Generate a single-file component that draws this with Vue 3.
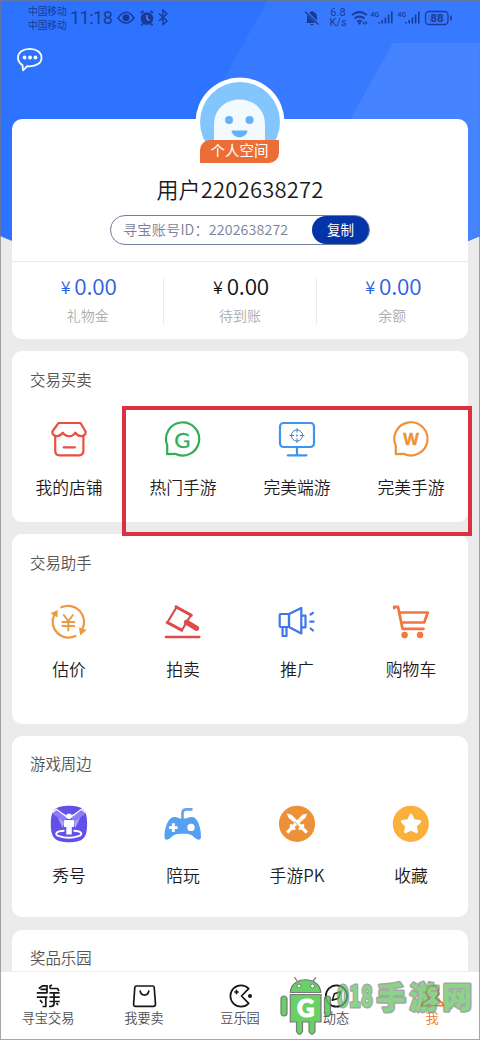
<script setup>
const sections = [
  {
    title: '交易买卖',
    size: 'trade',
    items: [
      {
        label: '我的店铺',
        icon: `<g fill="none" stroke="#e8503f" stroke-width="2.2" stroke-linejoin="round" stroke-linecap="round"><path d="M9.5 4H31.500L36.600 12.500C37.300 18 29.500 18.800 26.200 13.700C23.500 18.400 16.700 18.400 13.800 13.700C10.500 18.800 2.700 18 3.400 12.500Z"/><path d="M6.200 16.500V31.800Q6.200 36.300 10.500 36.300H30Q34.400 36.300 34.400 31.800V16.500M14.600 28.300H25.900"/></g>`,
      },
      {
        label: '热门手游',
        icon: `<path d="M4.200 35.200V26.200A16.600 16.600 0 1 1 12.100 34.800Z" fill="none" stroke="#2fae57" stroke-width="2.200" stroke-linejoin="round"/><text x="19.400" y="28.500" text-anchor="middle" font-family="Lato, sans-serif" font-size="22" font-weight="400" fill="#2fae57" stroke="#2fae57" stroke-width=".3">G</text>`,
      },
      {
        label: '完美端游',
        icon: `<g fill="none" stroke="#3d95f2" stroke-width="2.200" stroke-linecap="round"><rect x="3" y="4" width="34" height="24" rx="3.500"/><path d="M20 28V36M10.800 36.300H29.500"/><g stroke="#3d82bd" stroke-width="1"><circle cx="20" cy="16.500" r="5.600"/><path d="M20 9.500V13.200M20 19.800V23.500M13 16.500H16.700M23.300 16.500H27"/></g></g><circle cx="20" cy="16.500" r=".9" fill="#3d82bd"/>`,
      },
      {
        label: '完美手游',
        icon: `<path d="M4.800 35.200V26.700A16.600 16.600 0 1 1 12.700 34.800Z" fill="none" stroke="#ee9238" stroke-width="2.200" stroke-linejoin="round"/><text x="20" y="25.800" text-anchor="middle" font-family="Inter, sans-serif" font-size="16" font-weight="700" fill="#ee9238" stroke="#ee9238" stroke-width=".3">W</text>`,
      },
    ],
  },
  {
    title: '交易助手',
    size: 'helper',
    items: [
      {
        label: '估价',
        icon: `<g fill="none" stroke="#eb9a42" stroke-width="2.200" stroke-linecap="round"><path d="M12.400 5.300A16 16 0 0 1 33.400 27"/><path d="M26.500 34.100A16 16 0 0 1 5.600 12"/><path d="M14.800 13L19.300 19.200L23.900 13M19.300 19.200V28.500M13.400 20H25.300M13.400 24H25.300" stroke-width="1.900"/></g><path d="M1.500 11.200L8.700 8L8.500 15.500ZM30 25.500L37.600 28L31.100 33.500Z" fill="#eb9a42"/>`,
      },
      {
        label: '拍卖',
        icon: `<g fill="none" stroke="#dd4b4b" stroke-linecap="round" stroke-linejoin="round"><path d="M13.500 5.300L28 13L19 28L4.500 20.300Z" stroke-width="2.200"/><path d="M13 4.800L28.300 13.300M4.200 20.500L18.700 28.200" stroke-width="3"/><path d="M23.500 20.300L33.500 26.300" stroke-width="5.200"/><path d="M3 35.100H36.300" stroke-width="2.500"/></g>`,
      },
      {
        label: '推广',
        icon: `<g fill="none" stroke="#3d77ea" stroke-width="2.200" stroke-linecap="round" stroke-linejoin="round"><rect x="2.700" y="12" width="9.300" height="13" rx="1"/><path d="M12 12L24.300 6V31.500L12 25ZM24.800 13.700H28.500V25.300H24.800M5.600 25.500V34H9.500V25.500M33.600 12.500L36 10.800M33.200 19.700H36.500M33.600 26.500L36 28.500"/></g>`,
      },
      {
        label: '购物车',
        icon: `<g fill="none" stroke="#f2763d" stroke-width="2.700" stroke-linecap="round" stroke-linejoin="round"><path d="M3.200 6.200V4.800H7L11.500 26.800H32.500M8.200 10.500H36.800L33.200 20.500H10.200"/></g><circle cx="13.600" cy="33" r="3.200" fill="#f2763d"/><circle cx="29.100" cy="33" r="3.200" fill="#f2763d"/>`,
      },
    ],
  },
  {
    title: '游戏周边',
    size: 'around',
    items: [
      {
        label: '秀号',
        icon: `<path d="M20 1.800C34 1.800 38.100 6 38.100 20S34 38.200 20 38.200S1.800 34 1.800 20S6 1.800 20 1.800Z" fill="#6250e8"/><path d="M6 7L13.500 24L18.500 11ZM34 7L26.500 24L21.500 11Z" fill="#a89dfb"/><path d="M3 9.500L6.500 5.600L16.500 13L18 21L14 17Z M37 9.500L33.500 5.600L23.500 13L22 21L26 17Z" fill="#8b7ef5"/><path d="M3.500 8.500L7.500 5.300L18 13M36.500 8.500L32.500 5.300L22 13" fill="none" stroke="#fff" stroke-width="1.100"/><path d="M15.500 26.700C6.500 27 5 30.500 10 32.200C15.500 34 24 34 29.500 32.200C34.500 30.500 33 27 24.500 26.700" fill="none" stroke="#fff" stroke-width="1.900"/><circle cx="20" cy="12.200" r="2.800" fill="#fff"/><path d="M16 16H24Q25 16 25 17V23H22.800V30.500H17.300V23H15V17Q15 16 16 16Z" fill="#fff"/>`,
      },
      {
        label: '陪玩',
        icon: `<path d="M19.500 15V9.300Q19.500 5.300 23.500 5.300H29.500" fill="none" stroke="#68a6ea" stroke-width="2.700"/><path d="M11 13C15 13 15.800 14.800 19.700 14.800S25 13 29 13C35 13 38 25 38 32.500C38 37 34.300 36.200 31.500 33.500C28.500 30.300 26 29.700 19.700 29.700S11 30.300 8 33.500C5.200 36.200 1.500 37 1.500 32.500C1.500 25 5 13 11 13Z" fill="#55a0f0"/><path d="M10.300 19.300V28M6 23.600H14.600" stroke="#fff" stroke-width="2.900"/><circle cx="28" cy="23.400" r="3.700" fill="#fff"/>`,
      },
      {
        label: '手游PK',
        icon: `<circle cx="20" cy="19.800" r="18.100" fill="#ec9138"/><g fill="#fff"><path d="M9.800 9.500L14.500 10.700L24.500 20.800L26.300 19.800L27.500 21.200L26.700 23L31 27.500L28.700 29.800L24.500 25.500L22.600 26.300L21.200 25L22.300 23L11.500 13.700Z"/><path d="M30.200 9.500L25.500 10.700L15.500 20.800L13.700 19.800L12.500 21.200L13.300 23L9 27.500L11.300 29.800L15.500 25.500L17.400 26.300L18.800 25L17.700 23L28.500 13.700Z"/></g><path d="M17.200 17.400L22.400 22.700" stroke="#ec9138" stroke-width=".9"/>`,
      },
      {
        label: '收藏',
        icon: `<circle cx="19.800" cy="19.800" r="18.100" fill="#fcb03c"/><path d="M20 11L22.700 16.600L28.800 17.400L24.400 21.700L25.500 27.800L20 24.900L14.500 27.800L15.600 21.700L11.200 17.400L17.300 16.600Z" fill="#fff" stroke="#fff" stroke-width="2.800" stroke-linejoin="round"/>`,
      },
    ],
  },
]

const balances = [
  { value: '0.00', label: '礼物金', tone: 'blue' },
  { value: '0.00', label: '待到账', tone: 'dark' },
  { value: '0.00', label: '余额', tone: 'blue' },
]

const tabs = [
  {
    label: '寻宝交易',
    icon: `<g fill="none" stroke="#171717" stroke-width="1.700"><path d="M2.800 5.500L6.500 2.800H11V9.900M4.500 6.300H11M.8 9.900H11.500M.8 14.200H11.500M9.800 14.200V23.500H6.500M4 17L6.500 20M14 5.500V3L16 2M14 5.500H21.500L23 8M13.500 9.900H23.500M18 9.900V20.500Q18 23.500 14.500 23.500H13M13.500 14.200H23.800M13.500 18.500H23.800M20.500 20L22 22"/></g>`,
  },
  {
    label: '我要卖',
    icon: `<path d="M4.300 3H20.700Q22 3 22.200 4.500L23.500 21Q23.500 23.300 21.500 23.300H3.500Q1.500 23.300 1.600 21L2.800 4.500Q3 3 4.300 3ZM8.200 8.200C9 13.300 16 13.300 16.800 8.200" fill="none" stroke="#171717" stroke-width="1.700" stroke-linecap="round"/>`,
  },
  {
    label: '豆乐园',
    icon: `<path d="M20.700 5.700A10.600 10.600 0 1 0 20.700 20.300L13.500 13ZM8.500 6.800V11.200M6.300 9H10.700" fill="none" stroke="#171717" stroke-width="1.700" stroke-linejoin="round"/><circle cx="22" cy="13" r="2" fill="#171717"/>`,
  },
  {
    label: '动态',
    icon: `<circle cx="12.500" cy="13" r="10.700" fill="none" stroke="#171717" stroke-width="1.700"/><path d="M16.700 8.700L14.600 15.200L8.300 17.300L10.400 10.800Z" fill="none" stroke="#171717" stroke-width="1.500" stroke-linejoin="round"/>`,
  },
  {
    label: '我',
    active: true,
    icon: `<path d="M9.500 15.200C4.500 11 6 2.800 12.500 2.800S20.500 11 15.500 15.200C15.500 17 23.400 18 23.400 22.700H1.600C1.600 18 9.500 17 9.500 15.200Z" fill="none" stroke="#f07a22" stroke-width="1.800" stroke-linejoin="round"/>`,
  },
]
</script>

<template>
  <div class="phone">
    <svg class="backdrop" width="480" height="242" viewBox="0 0 480 242">
      <path d="M0 0H480V236L468 241H12L0 236Z" fill="#2e73ff" />
      <path d="M268 0H480V236L468 241H132Z" fill="#387aff" />
      <path d="M393 43H480V236L468 241H282Z" fill="#4583ff" />
    </svg>

    <header class="status">
      <div class="carriers"><span>中国移动</span><span>中国移动</span></div>
      <span class="clock">11:18</span>
      <svg class="status-left" width="56" height="20" viewBox="0 0 56 20">
        <g fill="none" stroke="#173b96" stroke-width="1.500">
          <path d="M1 10Q9 -1.500 17 10Q9 20 1 10Z" />
          <circle cx="9" cy="9.700" r="2.700" fill="#173b96" />
          <path d="M42 5.500L50 13L46 16.700V2L50 5.700L42 13" stroke-width="1.400" />
        </g>
        <circle cx="30" cy="10.500" r="6.300" fill="#173b96" />
        <path d="M24 5L26.500 3M36 5L33.500 3M26 15.500L24.500 17.500M34 15.500L35.500 17.500" stroke="#173b96" stroke-width="1.800" />
        <path d="M30 7V11L32.500 12.500" fill="none" stroke="#6795ff" stroke-width="1.200" />
      </svg>
      <svg class="bell" width="16" height="18" viewBox="0 0 16 18">
        <path d="M3 12.500V8Q3 3.500 7 3V2H9V3Q13 3.500 13 8V12.500L14 14H2ZM6 15H10Q8 17.500 6 15Z" fill="#173b96" />
        <path d="M1 2L15 15.500" stroke="#3b7cff" stroke-width="3" /><path d="M1 2.500L14.500 15.500" stroke="#173b96" stroke-width="1.300" />
      </svg>
      <div class="speed"><span>6.8</span><span>K/s</span></div>
      <svg class="signals" width="106" height="20" viewBox="0 0 106 20">
        <g fill="none" stroke="#173b96" stroke-width="1.700">
          <path d="M2 7Q9.500 1 17 7M4.500 10.500Q9.500 6.500 14.500 10.500M7 13.500Q9.500 11.700 12 13.500" />
          <path d="M29 15.500V14M32.200 15.500V12M35.400 15.500V9.500M38.600 15.500V6.500M41.800 15.500V3.500M56 15.500V14M59.200 15.500V12M62.400 15.500V9.500M65.600 15.500V6.500M68.800 15.500V3.500" stroke-width="1.600" />
          <rect x="75.500" y="3.500" width="22.500" height="13" rx="3.500" stroke-width="1.300" />
          <path d="M101 7.500V12.500" />
        </g>
        <circle cx="9.500" cy="15.200" r="1.300" fill="#173b96" />
        <path d="M12.500 15L14.500 13L14.500 17ZM17.500 15L15.500 13V17Z" fill="#173b96" />
        <rect x="78" y="5.500" width="17.500" height="9" rx="2" fill="#3b70ea" />
        <g font-family="Roboto, sans-serif" font-weight="500" fill="#173b96">
          <text x="20.500" y="8.500" font-size="7">4G</text><text x="47.500" y="8.500" font-size="7">4G</text>
          <text x="80.600" y="14.200" font-size="11" font-weight="700">88</text>
        </g>
      </svg>
    </header>

    <div class="topbar">
      <svg width="28" height="28" viewBox="0 0 28 28">
        <path d="M7 19.500Q2.500 16.500 2.500 12C2.500 6.500 7.500 3.200 14.200 3.200S26 6.500 26 12S20.700 20.600 14.200 20.600L11.700 20.500L7.500 24.700Z" fill="none" stroke="#fff" stroke-width="1.800" stroke-linejoin="round" transform="translate(-.5 .7)" />
        <g fill="#fff"><circle cx="8.600" cy="12.500" r="1.900" /><circle cx="14" cy="12.500" r="1.900" /><circle cx="19.400" cy="12.500" r="1.900" /></g>
      </svg>
    </div>

    <section class="card profile">
      <div class="avatar">
        <svg width="90" height="90" viewBox="0 0 90 90">
          <circle cx="45" cy="45" r="44.500" fill="#fff" />
          <circle cx="45" cy="45" r="40" fill="#83c6fd" />
          <path d="M19 67V48C19 14 70 14 70 48V67Z" fill="#f2f9ff" />
          <g fill="#64b1f4"><circle cx="34" cy="43" r="4" /><circle cx="54.500" cy="43" r="4" /><path d="M36.500 53.500H52.500C51.500 62.500 37.500 62.500 36.500 53.500Z" /></g>
        </svg>
        <span class="badge">个人空间</span>
      </div>
      <h1>用户2202638272</h1>
      <div class="account"><span>寻宝账号ID：2202638272</span><b>复制</b></div>
      <div class="balances">
        <div v-for="b in balances" :key="b.label" class="balance">
          <div class="money" :class="b.tone"><i>¥</i>{{ b.value }}</div>
          <small>{{ b.label }}</small>
        </div>
      </div>
    </section>

    <section v-for="s in sections" :key="s.title" class="card group" :class="s.size">
      <h2>{{ s.title }}</h2>
      <div class="grid">
        <div v-for="item in s.items" :key="item.label" class="entry">
          <svg width="40" height="40" viewBox="0 0 40 40" v-html="item.icon"></svg>
          <span>{{ item.label }}</span>
        </div>
      </div>
    </section>
    <section class="card group prizes"><h2>奖品乐园</h2></section>

    <div class="highlight"></div>

    <nav class="tabs">
      <div v-for="t in tabs" :key="t.label" class="tab" :class="{ active: t.active }">
        <svg width="25" height="26" viewBox="0 0 25 26" v-html="t.icon"></svg>
        <span>{{ t.label }}</span>
      </div>
    </nav>

    <svg class="watermark" width="200" height="66" viewBox="0 0 200 66">
      <g fill="#54cb50" stroke="#666" stroke-width="1.200">
        <path d="M17 5L14.500 1M33 5L36 1.500" />
        <path d="M10.300 16.500C11 -.5 40 -.5 40.700 16.500Z" />
        <rect x="1" y="20" width="6" height="20" rx="3" /><rect x="44.500" y="20" width="6" height="20" rx="3" />
        <path d="M10.300 18.500H41V46H35V55.500Q32 61.500 29 55.500V46H22.500V55.500Q19.500 61.500 16.500 55.500V46H10.300Z" />
      </g>
      <circle cx="19" cy="10" r="2" fill="#fff" stroke="#666" /><circle cx="32.500" cy="10" r="2" fill="#fff" stroke="#666" />
      <text class="mark-letter" x="25.800" y="41" text-anchor="middle">G</text>
      <g class="mark-words">
        <text class="mark-text digits" x="57" y="31" textLength="36" lengthAdjust="spacingAndGlyphs">018</text>
        <text class="mark-text" x="96.500 129.500 162.500" y="31.500">手游网</text>
      </g>
    </svg>
  </div>
</template>

<style>
body { margin: 0; }
</style>

<style scoped>
.phone {
  position: relative;
  box-sizing: border-box;
  width: 480px;
  height: 1040px;
  overflow: hidden;
  background: #ebebeb;
  font-family: "Noto Sans CJK SC", sans-serif;
  font-weight: 350;
  color: #222;
}
.phone::after {
  content: "";
  position: absolute;
  inset: 0;
  border: 1px solid rgba(120, 120, 120, .65);
  pointer-events: none;
}
.backdrop { position: absolute; left: 0; top: 0; }
.status {
  position: relative;
  display: flex;
  align-items: center;
  height: 36px;
  padding-left: 28px;
  color: #173b96;
}
.carriers { display: flex; flex-direction: column; width: 42px; font-size: 9.700px; line-height: 14px; font-weight: 400; }
.clock { width: 47px; font: 400 18px/20px Roboto, sans-serif; letter-spacing: -.5px; }
.status-left { margin-right: 131px; }
.bell { margin-right: 7px; }
.speed { display: flex; flex-direction: column; width: 22px; font: 400 11px/10px Roboto, sans-serif; text-align: center; }
.signals { margin-left: 1px; }
.topbar { position: relative; height: 83px; padding: 9px 0 0 16px; box-sizing: border-box; }
.card {
  position: relative;
  box-sizing: border-box;
  margin: 0 12px;
  border-radius: 10px;
  background: #fff;
}
.profile { height: 220px; margin-bottom: 12px; display: flex; flex-direction: column; align-items: center; }
.avatar { position: relative; width: 90px; height: 90px; margin-top: -42px; }
.avatar svg { display: block; }
.badge {
  position: absolute;
  left: 5px;
  top: 63px;
  width: 79px;
  height: 23px;
  border-radius: 10px 0 10px 0;
  background: #ec6e36;
  color: #fff;
  font-size: 14.500px;
  font-weight: 400;
  line-height: 20px;
  text-align: center;
}
h1 { margin: 7px 0 12px; font-size: 22px; line-height: 29px; font-weight: 350; letter-spacing: .2px; color: #1b1b1b; }
.account {
  display: flex;
  align-items: center;
  justify-content: space-between;
  box-sizing: border-box;
  width: 260px;
  height: 30px;
  border: 1px solid #707d9c;
  border-radius: 15px;
  padding-left: 12px;
  font-size: 14.200px;
  letter-spacing: .16px;
  color: #78839b;
}
.account span { line-height: 26px; padding-bottom: 2px; }
.account b {
  width: 57px;
  height: 28px;
  border-radius: 14px;
  background: #0434a8;
  color: #fff;
  font-size: 13.500px;
  font-weight: 400;
  line-height: 27px;
  letter-spacing: 0;
  text-align: center;
}
.balances { display: flex; width: 100%; margin-top: 16px; border-top: 1px solid #eaeaea; padding-top: 15px; }
.balance { flex: 1; height: 47px; text-align: center; }
.balance + .balance { border-left: 1px solid #eaeaea; }
.money { margin-top: -5px; padding-left: 2px; font-size: 22.500px; line-height: 26px; letter-spacing: -.2px; }
.money i { position: relative; top: -1px; margin-right: 4px; font-size: 18px; font-style: normal; line-height: 20px; }
.blue { color: #2b62df; }
.dark { color: #111; }
.balance small { display: block; margin-top: 7px; font-size: 14px; line-height: 20px; color: #adadad; }
.group { padding-top: 17px; }
h2 { margin: 0 0 0 18px; font-size: 15.400px; line-height: 22px; font-weight: 350; color: #555; }
.trade { height: 171px; margin-bottom: 12px; }
.helper { height: 190px; margin-bottom: 12px; }
.around { height: 181px; margin-bottom: 13px; padding-top: 16px; }
.prizes { height: 80px; padding-top: 16px; }
.grid { display: grid; grid-template-columns: repeat(4, 1fr); margin-top: 29px; }
.around .grid { margin-top: 30px; }
.entry { display: flex; flex-direction: column; align-items: center; font-size: 16.800px; line-height: 24px; color: #1c1c1c; }
.entry span { margin-top: 15px; }
.trade .entry span { margin-top: 16px; }
.around .entry span { margin-top: 19px; }
.highlight {
  position: absolute;
  left: 122px;
  top: 406px;
  width: 350px;
  height: 130px;
  box-sizing: border-box;
  border: 4px solid #de3043;
}
.tabs {
  position: absolute;
  left: 0;
  right: 0;
  bottom: 0;
  display: grid;
  grid-template-columns: repeat(5, 1fr);
  box-sizing: border-box;
  height: 69px;
  border-top: 1px solid #eee;
  background: #fff;
}
.tab { display: flex; flex-direction: column; align-items: center; padding-top: 11px; font-size: 13.200px; line-height: 18px; color: #505050; }
.tab.active { color: #f07a22; }
.watermark { position: absolute; left: 280px; top: 976px; opacity: .88; }
.mark-words { opacity: .82; }
.mark-letter { font: 900 24px Lato, sans-serif; fill: #fff; stroke: #fff; stroke-width: 1.200; }
.mark-text { font: 900 29.500px "Noto Sans CJK SC", sans-serif; fill: #5fc35c; stroke: #848484; stroke-width: 3; paint-order: stroke; stroke-linejoin: round; }
</style>
